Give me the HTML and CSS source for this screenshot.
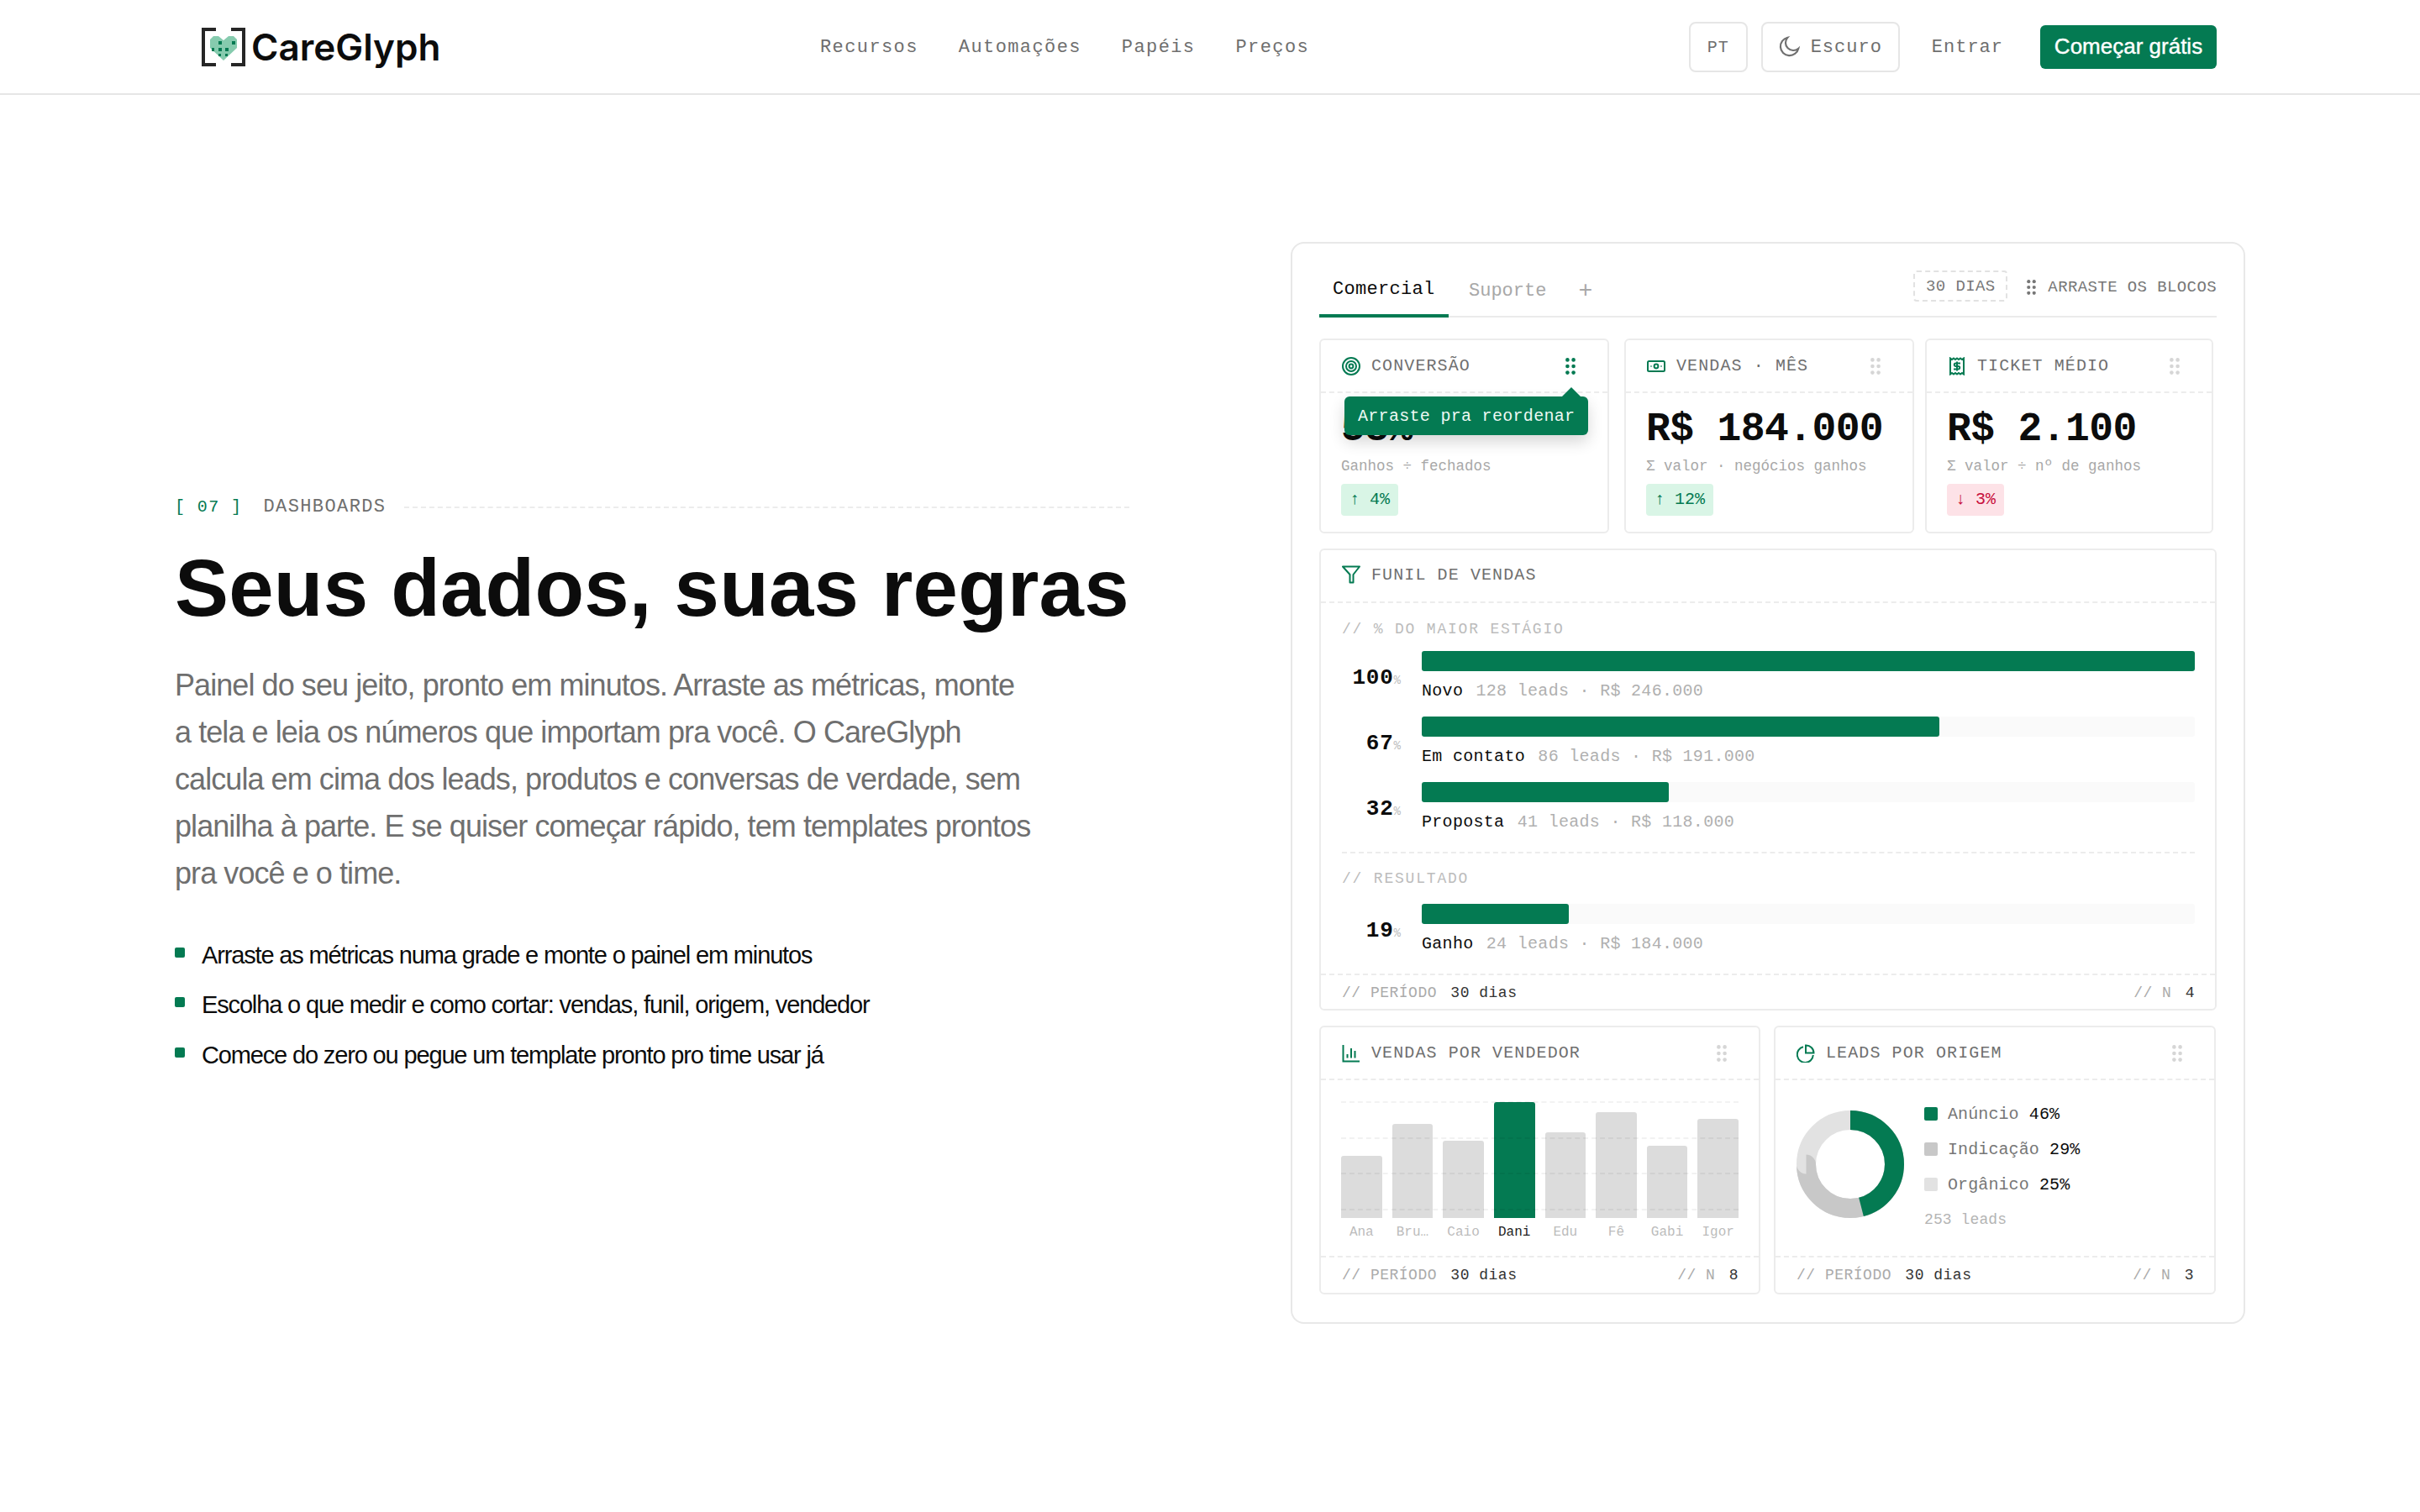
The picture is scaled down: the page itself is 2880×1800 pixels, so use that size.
FILE: index.html
```html
<!DOCTYPE html>
<html lang="pt-BR">
<head>
    <meta charset="UTF-8">
    <meta name="viewport" content="width=device-width, initial-scale=1.0">
    <title>CareGlyph</title>
    <link rel="stylesheet" href="styles.css">
</head>
<body>
    <svg class="defs" width="0" height="0">
        <symbol id="grip" viewBox="0 0 12 20">
            <circle cx="2.4" cy="2.4" r="2.3"/><circle cx="9.6" cy="2.4" r="2.3"/>
            <circle cx="2.4" cy="10" r="2.3"/><circle cx="9.6" cy="10" r="2.3"/>
            <circle cx="2.4" cy="17.6" r="2.3"/><circle cx="9.6" cy="17.6" r="2.3"/>
        </symbol>
    </svg>

    <header class="topbar">
        <a class="brand">
            <svg class="brand-mark" viewBox="0 0 52 46">
                <path d="M17 2H2V44H17M35 2H50V44H35" fill="none" stroke="#262626" stroke-width="4"/>
                <path d="M26 15L20 10H14L10 14V24L26 39L42 24V14L38 10H32Z" fill="#86cbae"/>
                <g fill="#047a52">
                    <rect x="20" y="16" width="4" height="4"/><rect x="36" y="16" width="4" height="4"/>
                    <rect x="12" y="24" width="3" height="4"/><rect x="20" y="24" width="4" height="4"/><rect x="28" y="24" width="4" height="4"/>
                    <rect x="20" y="31" width="3" height="3"/><rect x="28" y="31" width="3" height="3"/>
                </g>
            </svg>
            <span class="brand-name">CareGlyph</span>
        </a>
        <nav class="nav">
            <a>Recursos</a>
            <a>Automações</a>
            <a>Papéis</a>
            <a>Preços</a>
        </nav>
        <div class="actions">
            <button class="ghost lang">PT</button>
            <button class="ghost theme">
                <svg viewBox="0 0 24 24" class="moon"><path d="M9.5 2.5A10 10 0 1 0 21.5 14.5A8.5 8.5 0 0 1 9.5 2.5Z" fill="none" stroke="#707070" stroke-width="2"/></svg>
                <span>Escuro</span>
            </button>
            <a class="login">Entrar</a>
            <button class="cta">Começar grátis</button>
        </div>
    </header>

    <main class="hero">
        <section class="copy">
            <div class="eyebrow">
                <span class="eyebrow-num">[ 07 ]</span>
                <span class="eyebrow-label">DASHBOARDS</span>
                <span class="eyebrow-line"></span>
            </div>
            <h1>Seus dados, suas regras</h1>
            <p class="lead">Painel do seu jeito, pronto em minutos. Arraste as métricas, monte<br>a tela e leia os números que importam pra você. O CareGlyph<br>calcula em cima dos leads, produtos e conversas de verdade, sem<br>planilha à parte. E se quiser começar rápido, tem templates prontos<br>pra você e o time.</p>
            <ul class="points">
                <li>Arraste as métricas numa grade e monte o painel em minutos</li>
                <li>Escolha o que medir e como cortar: vendas, funil, origem, vendedor</li>
                <li>Comece do zero ou pegue um template pronto pro time usar já</li>
            </ul>
        </section>

        <section class="panel">
            <div class="tabs">
                <span class="tab active">Comercial</span>
                <span class="tab">Suporte</span>
                <span class="tab-add">+</span>
                <div class="tabs-right">
                    <span class="range">30 DIAS</span>
                    <span class="drag-hint"><svg class="grip-hint"><use href="#grip"/></svg>ARRASTE OS BLOCOS</span>
                </div>
            </div>

            <div class="stats">
                <article class="card stat">
                    <div class="card-head">
                        <svg class="icon" viewBox="0 0 22 22" fill="none" stroke="#047a52" stroke-width="2"><circle cx="11" cy="11" r="10"/><circle cx="11" cy="11" r="6"/><circle cx="11" cy="11" r="2.4"/></svg>
                        <span class="card-title">CONVERSÃO</span>
                        <svg class="grip on"><use href="#grip"/></svg>
                    </div>
                    <div class="tooltip">Arraste pra reordenar</div>
                    <div class="stat-body">
                        <div class="value">58%</div>
                        <div class="sub">Ganhos ÷ fechados</div>
                        <span class="delta up">↑ 4%</span>
                    </div>
                </article>
                <article class="card stat">
                    <div class="card-head">
                        <svg class="icon" viewBox="0 0 22 22" fill="none" stroke="#047a52" stroke-width="2"><rect x="1" y="5" width="20" height="12" rx="1.5"/><circle cx="11" cy="11" r="2.4"/><path d="M4.5 11h1M16.5 11h1"/></svg>
                        <span class="card-title">VENDAS · MÊS</span>
                        <svg class="grip"><use href="#grip"/></svg>
                    </div>
                    <div class="stat-body">
                        <div class="value">R$ 184.000</div>
                        <div class="sub">Σ valor · negócios ganhos</div>
                        <span class="delta up">↑ 12%</span>
                    </div>
                </article>
                <article class="card stat stat-last">
                    <div class="card-head">
                        <svg class="icon" viewBox="0 0 22 22" fill="none" stroke="#047a52" stroke-width="2"><path d="M3 1.5L5 3L7 1.5L9 3L11 1.5L13 3L15 1.5L17 3L19 1.5V20.5L17 19L15 20.5L13 19L11 20.5L9 19L7 20.5L5 19L3 20.5Z"/><path d="M15 7.5H9.5A1.7 1.7 0 0 0 9.5 11H12.5A1.7 1.7 0 0 1 12.5 14.5H7M11 5.5V16.5"/></svg>
                        <span class="card-title">TICKET MÉDIO</span>
                        <svg class="grip"><use href="#grip"/></svg>
                    </div>
                    <div class="stat-body">
                        <div class="value">R$ 2.100</div>
                        <div class="sub">Σ valor ÷ nº de ganhos</div>
                        <span class="delta down">↓ 3%</span>
                    </div>
                </article>
            </div>

            <article class="card funnel">
                <div class="card-head">
                    <svg class="icon" viewBox="0 0 22 22" fill="none" stroke="#047a52" stroke-width="2" stroke-linejoin="round"><path d="M1 1.5H21L13.5 11V20.5L9.5 20.5V11Z"/></svg>
                    <span class="card-title">FUNIL DE VENDAS</span>
                </div>
                <div class="funnel-body">
                    <div class="section-label">// % DO MAIOR ESTÁGIO</div>
                    <div class="stage">
                        <div class="pct">100<small>%</small></div>
                        <div class="stage-main">
                            <div class="track"><div class="fill" style="width: 100%"></div></div>
                            <div class="stage-text"><b>Novo</b> 128 leads · R$ 246.000</div>
                        </div>
                    </div>
                    <div class="stage">
                        <div class="pct">67<small>%</small></div>
                        <div class="stage-main">
                            <div class="track"><div class="fill" style="width: 67%"></div></div>
                            <div class="stage-text"><b>Em contato</b> 86 leads · R$ 191.000</div>
                        </div>
                    </div>
                    <div class="stage">
                        <div class="pct">32<small>%</small></div>
                        <div class="stage-main">
                            <div class="track"><div class="fill" style="width: 32%"></div></div>
                            <div class="stage-text"><b>Proposta</b> 41 leads · R$ 118.000</div>
                        </div>
                    </div>
                    <div class="result">
                        <div class="section-label">// RESULTADO</div>
                        <div class="stage">
                            <div class="pct">19<small>%</small></div>
                            <div class="stage-main">
                                <div class="track"><div class="fill" style="width: 19%"></div></div>
                                <div class="stage-text"><b>Ganho</b> 24 leads · R$ 184.000</div>
                            </div>
                        </div>
                    </div>
                </div>
                <div class="card-foot"><span>// PERÍODO <b>30 dias</b></span><span>// N <b>4</b></span></div>
            </article>

            <div class="duo">
                <article class="card chart-card">
                    <div class="card-head">
                        <svg class="icon" viewBox="0 0 22 22" fill="none" stroke="#047a52" stroke-width="2"><path d="M1.5 1V20.5H21M6.5 16.5V12M11 16.5V5M15.5 16.5V8"/></svg>
                        <span class="card-title">VENDAS POR VENDEDOR</span>
                        <svg class="grip"><use href="#grip"/></svg>
                    </div>
                    <div class="chart-body">
                        <div class="plot">
                            <div class="bars">
                                <div class="bar" style="height: 74px"></div>
                                <div class="bar" style="height: 112px"></div>
                                <div class="bar" style="height: 92px"></div>
                                <div class="bar top" style="height: 138px"></div>
                                <div class="bar" style="height: 102px"></div>
                                <div class="bar" style="height: 126px"></div>
                                <div class="bar" style="height: 86px"></div>
                                <div class="bar" style="height: 118px"></div>
                            </div>
                            <div class="gridlines"><span></span><span></span><span></span><span></span></div>
                        </div>
                        <div class="names">
                            <span>Ana</span><span>Bru…</span><span>Caio</span><span class="top">Dani</span><span>Edu</span><span>Fê</span><span>Gabi</span><span>Igor</span>
                        </div>
                    </div>
                    <div class="card-foot"><span>// PERÍODO <b>30 dias</b></span><span>// N <b>8</b></span></div>
                </article>

                <article class="card chart-card">
                    <div class="card-head">
                        <svg class="icon" viewBox="0 0 22 22" fill="none" stroke="#047a52" stroke-width="2"><path d="M8 3.2A9.5 9.5 0 1 0 19.8 13"/><path d="M11 1.5A9 9 0 0 1 20.5 10.5H11Z"/></svg>
                        <span class="card-title">LEADS POR ORIGEM</span>
                        <svg class="grip"><use href="#grip"/></svg>
                    </div>
                    <div class="donut-body">
                        <svg class="donut" viewBox="0 0 128 128" fill="none" stroke-width="23">
                            <circle cx="64" cy="64" r="52.5" stroke="#e2e2e2"/>
                            <circle cx="64" cy="64" r="52.5" stroke="#c8c8c8" pathLength="100" stroke-dasharray="75 25" transform="rotate(-90 64 64)"/>
                            <circle cx="64" cy="64" r="52.5" stroke="#047a52" pathLength="100" stroke-dasharray="46 54" transform="rotate(-90 64 64)"/>
                        </svg>
                        <ul class="legend">
                            <li><i class="swatch s1"></i>Anúncio <b>46%</b></li>
                            <li><i class="swatch s2"></i>Indicação <b>29%</b></li>
                            <li><i class="swatch s3"></i>Orgânico <b>25%</b></li>
                            <li class="legend-total">253 leads</li>
                        </ul>
                    </div>
                    <div class="card-foot"><span>// PERÍODO <b>30 dias</b></span><span>// N <b>3</b></span></div>
                </article>
            </div>
        </section>
    </main>
</body>
</html>
```

FILE: styles.css
```css
* {
    box-sizing: border-box;
}

body {
    margin: 0;
    background: #fff;
    color: #0c0c0c;
    font-family: "Liberation Sans", Arial, sans-serif;
}

.defs {
    position: absolute;
}

ul {
    list-style: none;
    margin: 0;
    padding: 0;
}

button {
    font: inherit;
    background: none;
    cursor: pointer;
}

/* top bar */
.topbar {
    height: 113px;
    padding: 0 242px 0 240px;
    display: flex;
    justify-content: space-between;
    align-items: center;
    border-bottom: 2px solid #e6e6e6;
}

.brand {
    display: flex;
    align-items: center;
    gap: 7px;
}

.brand-mark {
    width: 52px;
    height: 46px;
}

.brand-name {
    font-family: Inter, sans-serif;
    font-size: 44px;
    font-weight: 600;
    letter-spacing: 0;
}

.nav {
    display: flex;
    gap: 48px;
    padding-top: 2px;
}

.nav a,
.login,
.ghost {
    font-family: "Liberation Mono", monospace;
    font-size: 22px;
    letter-spacing: 1.4px;
    color: #6f6f6f;
}

.actions {
    display: flex;
    align-items: center;
}

.ghost {
    height: 60px;
    padding-top: 2px;
    border: 2px solid #e6e6e6;
    border-radius: 8px;
    display: flex;
    align-items: center;
}

.lang {
    width: 70px;
    justify-content: center;
    font-size: 20px;
    letter-spacing: 1px;
    margin-right: 16px;
}

.theme {
    width: 165px;
    justify-content: center;
    gap: 12px;
    margin-right: 38px;
    letter-spacing: 1px;
}

.moon {
    width: 26px;
    height: 26px;
    margin-top: -2px;
}

.login {
    margin-right: 44px;
    padding-top: 2px;
    letter-spacing: 1px;
}

.cta {
    width: 210px;
    height: 52px;
    border: none;
    border-radius: 6px;
    background: #047a52;
    color: #fff;
    font-size: 26px;
    -webkit-text-stroke: 0.4px #fff;
}

/* hero */
.hero {
    padding: 175px 208px 0;
    display: grid;
    grid-template-columns: 1136px 1136px;
    gap: 192px;
    align-items: center;
}

.copy {
    padding-top: 2px;
}

.eyebrow {
    display: flex;
    align-items: center;
    font-family: "Liberation Mono", monospace;
    font-size: 22px;
    line-height: 26px;
    letter-spacing: 1.4px;
    color: #6f6f6f;
}

.eyebrow-num {
    color: #047a52;
    font-size: 20px;
    white-space: pre;
    margin-right: 25px;
}

.eyebrow-line {
    flex: 1;
    margin-left: 22px;
    border-top: 2px dashed #ececec;
}

h1 {
    margin: 27px 0 0;
    font-size: 96px;
    line-height: 112px;
    font-weight: 700;
    letter-spacing: 0.2px;
    white-space: nowrap;
}

.lead {
    margin: 32px 0 0;
    font-size: 36px;
    line-height: 56px;
    letter-spacing: -0.93px;
    color: #6f6f6f;
}

.points {
    margin-top: 49px;
}

.points li {
    position: relative;
    padding-left: 32px;
    font-size: 29px;
    line-height: 40px;
    letter-spacing: -1.15px;
    margin-bottom: 19.5px;
}

.points li:last-child {
    margin-bottom: 0;
}

.points li::before {
    content: "";
    position: absolute;
    left: 0;
    top: 11px;
    width: 12px;
    height: 12px;
    border-radius: 2px;
    background: #047a52;
}

/* panel */
.panel {
    height: 1288px;
    border: 2px solid #e8e8e8;
    border-radius: 16px;
    padding: 0 32px;
    font-family: "Liberation Mono", monospace;
}

.tabs {
    display: flex;
    align-items: flex-start;
    padding-top: 30px;
    height: 88px;
    border-bottom: 2px solid #ebebeb;
}

.tab {
    height: 58px;
    padding: 12px 0 0;
    font-size: 22px;
    line-height: 26px;
    color: #a8a8a8;
    margin-right: 38px;
    margin-top: 2px;
}

.tab.active {
    width: 154px;
    margin: 0 24px 0 0;
    padding-left: 16px;
    letter-spacing: 0.3px;
    color: #0c0c0c;
    border-bottom: 4px solid #047a52;
}

.tab-add {
    font-size: 28px;
    line-height: 26px;
    padding-top: 14px;
    color: #a8a8a8;
}

.tabs-right {
    margin-left: auto;
    display: flex;
    align-items: center;
    height: 37px;
    margin-top: 2px;
    font-size: 19px;
    letter-spacing: 0.4px;
    color: #777;
}

.range {
    width: 112px;
    height: 37px;
    line-height: 35px;
    text-align: center;
    border: 2px dashed #e2e2e2;
    border-radius: 4px;
    margin-right: 23px;
}

.drag-hint {
    display: flex;
    align-items: center;
    gap: 14px;
    padding-top: 3px;
}

.grip-hint {
    width: 11px;
    height: 18px;
    fill: #777;
}

.card {
    border: 2px solid #ececec;
    border-radius: 6px;
    background: #fff;
}

.card-head {
    height: 63px;
    padding: 0 24px 0 25px;
    display: flex;
    align-items: center;
    border-bottom: 2px dashed #ececec;
}

.icon {
    width: 22px;
    height: 22px;
    flex: none;
    margin-right: 13px;
}

.card-title {
    flex: 1;
    font-size: 20px;
    letter-spacing: 1.1px;
    color: #6f6f6f;
}

.grip {
    width: 12px;
    height: 20px;
    flex: none;
    margin-right: 14px;
    fill: #d6d6d6;
}

.grip.on {
    fill: #047a52;
}

.stats {
    display: flex;
    gap: 18px;
    margin-top: 25px;
}

.stat {
    position: relative;
    width: 345px;
    height: 232px;
}

.stat-last {
    width: 343px;
    margin-left: -5px;
}

.stat-body {
    padding: 23px 0 0 24px;
}

.value {
    font-size: 48px;
    line-height: 40px;
    font-weight: 700;
    letter-spacing: -0.6px;
}

.sub {
    margin-top: 12px;
    font-size: 17.5px;
    line-height: 24px;
    color: #a8a8a8;
}

.delta {
    display: inline-block;
    margin-top: 9px;
    height: 38px;
    padding: 0 10px;
    border-radius: 4px;
    font-size: 20px;
    line-height: 38px;
}

.delta.up {
    background: #d9f5e6;
    color: #047a52;
}

.delta.down {
    background: #fde2e7;
    color: #c8103e;
}

.tooltip {
    position: absolute;
    left: 28px;
    top: 67px;
    width: 290px;
    height: 46px;
    padding-left: 16px;
    border-radius: 6px;
    background: #047a52;
    color: #eef9f4;
    font-size: 20px;
    line-height: 47px;
    letter-spacing: 0.3px;
    box-shadow: 0 8px 18px rgba(0, 0, 0, 0.16);
}

.tooltip::before {
    content: "";
    position: absolute;
    left: 258px;
    top: -11px;
    border-left: 12px solid transparent;
    border-right: 12px solid transparent;
    border-bottom: 12px solid #047a52;
}

/* funnel */
.funnel {
    margin-top: 18px;
    height: 550px;
}

.funnel .card-head {
    padding-bottom: 3px;
}

.funnel-body {
    height: 441px;
    padding: 20px 24px 0 25px;
}

.section-label {
    font-size: 18px;
    line-height: 22px;
    letter-spacing: 1.8px;
    color: #bcbcbc;
    margin-bottom: 15px;
}

.stage {
    display: flex;
    align-items: center;
    gap: 25px;
    height: 60px;
    margin-bottom: 18px;
}

.pct {
    width: 70px;
    padding-top: 4px;
    text-align: right;
    font-size: 26px;
    font-weight: 700;
    letter-spacing: 0.8px;
}

.pct small {
    font-size: 14px;
    font-weight: 400;
    letter-spacing: 0;
    color: #bcbcbc;
}

.stage-main {
    flex: 1;
}

.track {
    height: 24px;
    border-radius: 3px;
    background: #fafafa;
}

.fill {
    height: 100%;
    border-radius: 3px;
    background: #047a52;
}

.stage-text {
    margin-top: 11px;
    font-size: 20px;
    line-height: 26px;
    letter-spacing: 0.3px;
    color: #b0b0b0;
}

.stage-text b {
    font-weight: 400;
    color: #0c0c0c;
    margin-right: 3px;
}

.result {
    margin-top: 23px;
    padding-top: 19px;
    border-top: 2px dashed #ececec;
}

.result .section-label {
    margin-bottom: 19px;
}

.result .stage {
    margin-bottom: 0;
}

.card-foot {
    height: 44px;
    padding: 0 24px 0 25px;
    display: flex;
    justify-content: space-between;
    align-items: center;
    border-top: 2px dashed #ececec;
    font-size: 18px;
    letter-spacing: 0.5px;
    color: #ababab;
}

.card-foot b {
    font-weight: 400;
    color: #333;
    margin-left: 5px;
}

/* bottom row */
.duo {
    display: grid;
    grid-template-columns: 525px 526px;
    gap: 16px;
    margin-top: 18px;
}

.chart-card {
    height: 320px;
}

.chart-body {
    height: 209px;
    padding: 25px 24px 0;
}

.plot {
    position: relative;
    height: 139px;
}

.bars,
.names {
    display: grid;
    grid-template-columns: repeat(8, 1fr);
    gap: 12px;
}

.bars {
    height: 100%;
    align-items: end;
}

.bar {
    border-radius: 3px 3px 0 0;
    background: #dcdcdc;
}

.bar.top {
    background: #047a52;
}

.gridlines {
    position: absolute;
    left: 0;
    right: 0;
    top: 0;
    bottom: 9px;
    display: flex;
    flex-direction: column;
    justify-content: space-between;
}

.gridlines span {
    border-top: 2px dashed rgba(0, 0, 0, 0.05);
}

.names {
    margin-top: 7px;
    font-size: 16px;
    line-height: 20px;
    text-align: center;
    color: #bcbcbc;
}

.names .top {
    color: #222;
}

.donut-body {
    height: 209px;
    padding: 28px 24px 0 25px;
    display: flex;
    align-items: flex-start;
    gap: 24px;
}

.donut {
    width: 128px;
    height: 128px;
    margin-top: 8px;
    flex: none;
}

.legend {
    font-size: 20px;
    letter-spacing: 0.1px;
    color: #777;
}

.legend li {
    display: flex;
    align-items: center;
    height: 24px;
    margin-bottom: 18px;
    white-space: pre;
}

.legend b {
    font-weight: 400;
    color: #0c0c0c;
}

.swatch {
    width: 16px;
    height: 16px;
    border-radius: 2px;
    margin-right: 12px;
}

.s1 {
    background: #047a52;
}

.s2 {
    background: #c8c8c8;
}

.s3 {
    background: #e2e2e2;
}

.legend .legend-total {
    font-size: 18px;
    color: #b4b4b4;
}
```
